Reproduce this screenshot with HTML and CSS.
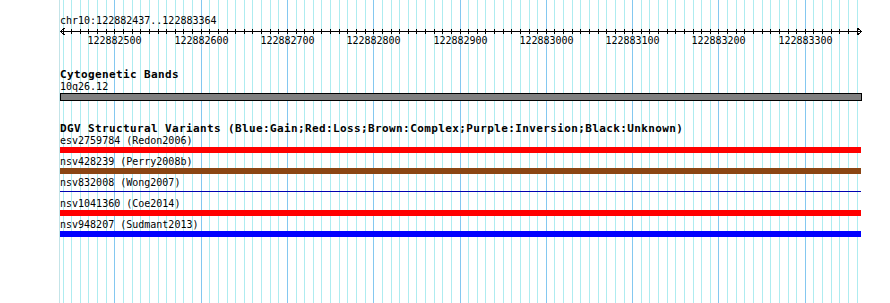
FILE: index.html
```html
<!DOCTYPE html>
<html>
<head>
    <title>chr10:122882437..122883364</title>
    <link rel="stylesheet" href="styles.css">
</head>
<body>
    <svg id="grid" class="grid" width="890" height="303"></svg>

    <div class="view">
        <div class="locus">chr10:122882437..122883364</div>
        <svg id="ruler" class="ruler" width="802" height="20"></svg>

        <div class="track">
            <div class="track-label">Cytogenetic Bands</div>
            <div class="feature-label">10q26.12</div>
            <div class="band"></div>
        </div>

        <div class="track dgv">
            <div class="track-label">DGV Structural Variants (Blue:Gain;Red:Loss;Brown:Complex;Purple:Inversion;Black:Unknown)</div>
            <div class="feature-label">esv2759784 (Redon2006)</div>
            <div class="bar loss"></div>
            <div class="feature-label">nsv428239 (Perry2008b)</div>
            <div class="bar complex"></div>
            <div class="feature-label">nsv832008 (Wong2007)</div>
            <div class="bar thin"></div>
            <div class="feature-label">nsv1041360 (Coe2014)</div>
            <div class="bar loss"></div>
            <div class="feature-label">nsv948207 (Sudmant2013)</div>
            <div class="bar gain"></div>
        </div>
    </div>

    <script>
        const start = 122882437;
        const end = 122883364;
        const left = 60;
        const scale = 800 / (end - start);
        const ns = 'http://www.w3.org/2000/svg';

        function el(name, attrs) {
            const node = document.createElementNS(ns, name);
            for (const k in attrs) node.setAttribute(k, attrs[k]);
            return node;
        }

        const grid = document.getElementById('grid');
        const ruler = document.getElementById('ruler');

        // view edge
        grid.appendChild(el('line', { x1: 59.5, y1: 0, x2: 59.5, y2: 303, class: 'edge' }));

        // ruler line + arrows
        ruler.appendChild(el('line', { x1: 0, y1: 4.5, x2: 801, y2: 4.5, class: 'axis' }));
        ruler.appendChild(el('polyline', { points: '4.5,1 0.5,4.5 4.5,8', class: 'axis' }));
        ruler.appendChild(el('polyline', { points: '797.5,1 801.5,4.5 797.5,8', class: 'axis' }));

        for (let bp = Math.ceil(start / 10) * 10; bp <= end; bp += 10) {
            const x = Math.round((bp - start) * scale);
            const major = bp % 100 === 0;

            grid.appendChild(el('line', {
                x1: left + x + 0.5, y1: 0, x2: left + x + 0.5, y2: 303,
                class: major ? 'major' : 'minor'
            }));

            ruler.appendChild(el('line', { x1: x + 0.5, y1: 2, x2: x + 0.5, y2: 7, class: 'axis' }));

            if (major) {
                const label = el('text', { x: x + 0.5, y: 17, class: 'tick-label' });
                label.textContent = bp;
                ruler.appendChild(label);
            }
        }
    </script>
</body>
</html>
```

FILE: styles.css
```css
body { margin: 0; font-family: "DejaVu Sans Mono", monospace; font-size: 10px; color: #000; background: #fff; }
.grid { position: absolute; top: 0; left: 0; shape-rendering: crispEdges; }
.grid .minor { stroke: #aeecf0; stroke-width: 1; }
.grid .major { stroke: #84c8f0; stroke-width: 1; }
.grid .edge { stroke: #c4e4e8; stroke-width: 1; }
.view { position: relative; width: 802px; margin-left: 60px; }
.locus { padding-top: 15px; line-height: 12px; white-space: nowrap; }
.ruler { display: block; overflow: visible; }
.ruler .axis { stroke: #000; stroke-width: 1; fill: none; shape-rendering: crispEdges; }
.tick-label { font-family: "DejaVu Sans Mono", monospace; font-size: 10px; text-anchor: middle; fill: #000; }
.track-label { margin-top: 21px; font-size: 11px; font-weight: bold; letter-spacing: .38px; line-height: 13px; white-space: nowrap; }
.dgv .track-label { margin-top: 21px; }
.feature-label { line-height: 12px; white-space: nowrap; }
.band { height: 6px; margin-top: 0; border: 1px solid #000; background: #808080; }
.bar { height: 6px; width: 801px; margin-bottom: 3px; }
.bar.loss { background: #ff0000; }
.bar.gain { background: #0000ff; }
.bar.complex { background: #8b4513; }
.bar.thin { height: 1px; margin-top: 2px; margin-bottom: 6px; background: #0000b0; }
```
